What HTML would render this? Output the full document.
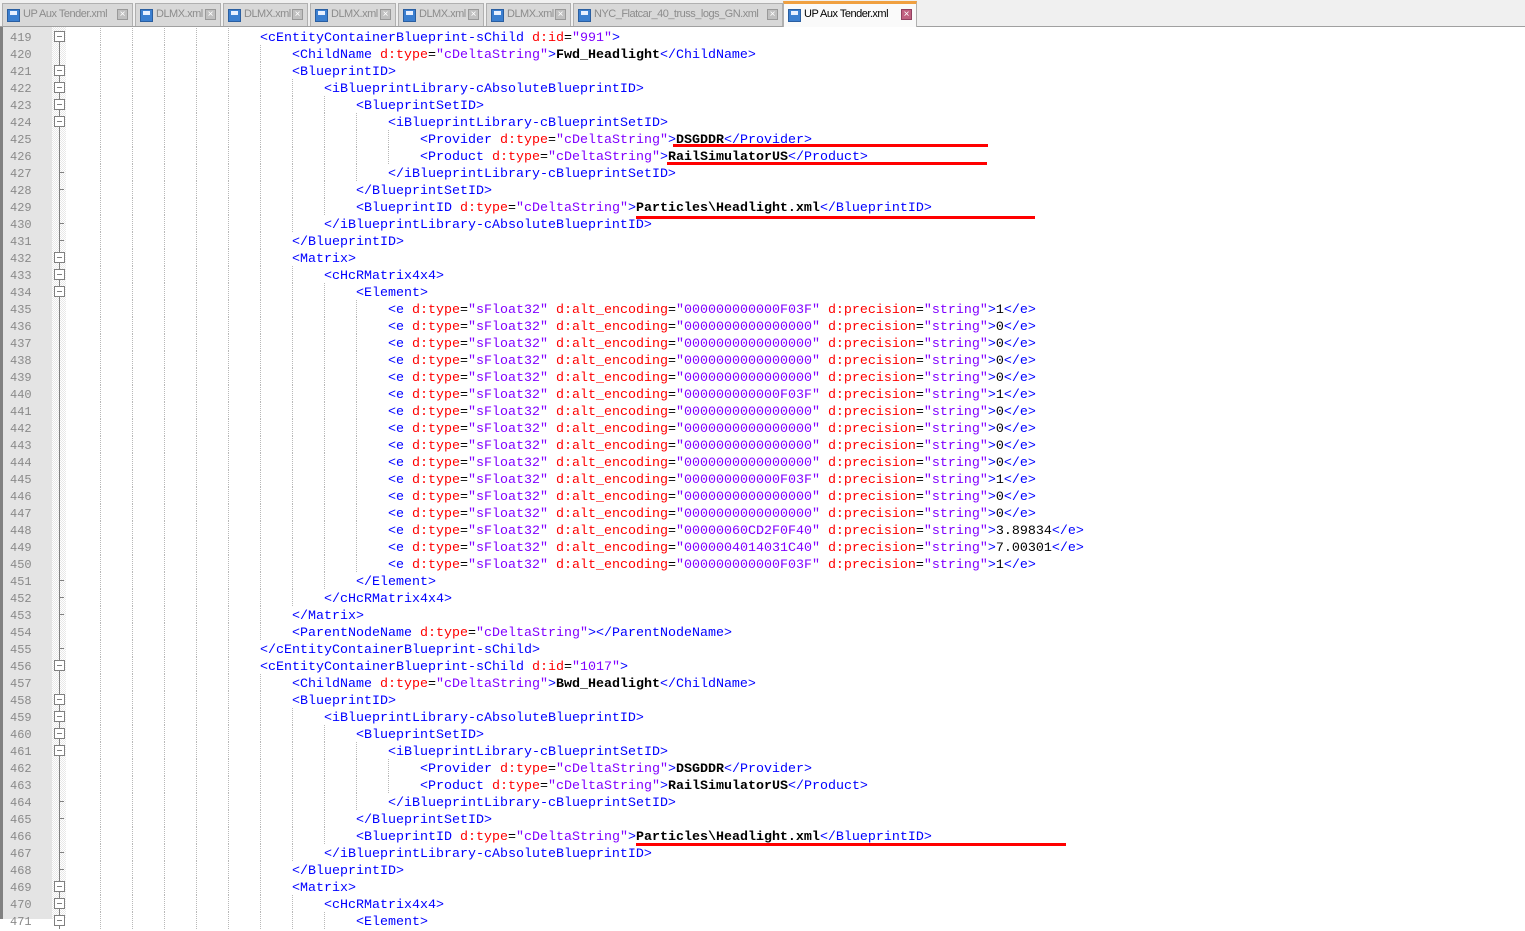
<!DOCTYPE html>
<html><head><meta charset="utf-8"><style>
*{margin:0;padding:0;box-sizing:border-box}
body{width:1525px;height:919px;overflow:hidden;background:#fff;position:relative;font-family:"Liberation Mono",monospace}
#tabs{position:absolute;left:0;top:0;width:1525px;height:27px;background:#f0f0f0;border-bottom:1px solid #a0a0a0}
.tab{position:absolute;top:3px;height:23px;background:#d8d8d8;border:1px solid #b0b0b0;border-bottom:none;font-family:"Liberation Sans",sans-serif;font-size:11px;color:#8c8c8c;line-height:21px;padding-left:20px;letter-spacing:-0.5px;white-space:nowrap;overflow:hidden}
.tab .ic{position:absolute;left:4px;top:5px;width:13px;height:13px;background:#3b7fd0;border:1px solid #2a5ea0}
.tab .ic:after{content:"";position:absolute;left:2px;top:1px;width:7px;height:4px;background:#e8f0ff}
.tab .cl{position:absolute;right:4px;top:5px;width:11px;height:11px;background:#c0c0c0;border:1px solid #999;color:#fff;font-size:10px;line-height:9px;text-align:center;letter-spacing:0}
.tab.act{top:1px;height:26px;background:#fafafa;color:#000;border-top:3px solid #f0a040}
.tab.act .cl{background:#c06080;border-color:#904060}
#gut{position:absolute;left:0;top:27px;width:52px;height:892px;background:#e4e4e4;border-left:3px solid #808080}
#fold{position:absolute;left:52px;top:27px;width:14px;height:892px;background:repeating-conic-gradient(#e8e8e8 0 25%,#fff 0 50%) 0 0/2px 2px}
.ln{position:absolute;left:10px;height:17px;line-height:17px;font-size:12px;color:#8a8a8a}
.l{position:absolute;height:17px;line-height:17px;font-size:13.33px;white-space:pre;color:#000}
.g{position:absolute;width:0;height:17px;border-left:1px dotted #b8b8b8}
.t{color:#0000ff}.a{color:#ff0000}.v{color:#8000ff}.x{font-weight:bold}
.vl{position:absolute;left:59px;width:1px;background:#808080}
.fb{position:absolute;left:54px;width:11px;height:11px;border:1px solid #808080;background:#fff}
.fb:after{content:"";position:absolute;left:2px;top:4px;width:5px;height:1px;background:#808080}
.tk{position:absolute;left:59px;width:5px;height:1px;background:#808080}
.r{position:absolute;height:3px;background:#f00}
</style></head><body>
<div id="tabs">
<div class="tab" style="left:2px;width:131px"><span class="ic"></span>UP Aux Tender.xml<span class="cl">×</span></div>
<div class="tab" style="left:135px;width:86px"><span class="ic"></span>DLMX.xml<span class="cl">×</span></div>
<div class="tab" style="left:223px;width:85px"><span class="ic"></span>DLMX.xml<span class="cl">×</span></div>
<div class="tab" style="left:310px;width:86px"><span class="ic"></span>DLMX.xml<span class="cl">×</span></div>
<div class="tab" style="left:398px;width:86px"><span class="ic"></span>DLMX.xml<span class="cl">×</span></div>
<div class="tab" style="left:486px;width:85px"><span class="ic"></span>DLMX.xml<span class="cl">×</span></div>
<div class="tab" style="left:573px;width:210px"><span class="ic"></span>NYC_Flatcar_40_truss_logs_GN.xml<span class="cl">×</span></div>
<div class="tab act" style="left:783px;width:134px"><span class="ic"></span>UP Aux Tender.xml<span class="cl">×</span></div>
</div>
<div id="gut"></div><div id="fold"></div>
<div id="c"></div>
<script>
var L=[
[6,'<span class="t">&lt;cEntityContainerBlueprint-sChild </span><span class="a">d:id</span>=<span class="v">"991"</span><span class="t">&gt;</span>','b'],
[7,'<span class="t">&lt;ChildName </span><span class="a">d:type</span>=<span class="v">"cDeltaString"</span><span class="t">&gt;</span><span class="x">Fwd_Headlight</span><span class="t">&lt;/ChildName&gt;</span>','l'],
[7,'<span class="t">&lt;BlueprintID&gt;</span>','b'],
[8,'<span class="t">&lt;iBlueprintLibrary-cAbsoluteBlueprintID&gt;</span>','b'],
[9,'<span class="t">&lt;BlueprintSetID&gt;</span>','b'],
[10,'<span class="t">&lt;iBlueprintLibrary-cBlueprintSetID&gt;</span>','b'],
[11,'<span class="t">&lt;Provider </span><span class="a">d:type</span>=<span class="v">"cDeltaString"</span><span class="t">&gt;</span><span class="x">DSGDDR</span><span class="t">&lt;/Provider&gt;</span>','l'],
[11,'<span class="t">&lt;Product </span><span class="a">d:type</span>=<span class="v">"cDeltaString"</span><span class="t">&gt;</span><span class="x">RailSimulatorUS</span><span class="t">&lt;/Product&gt;</span>','l'],
[10,'<span class="t">&lt;/iBlueprintLibrary-cBlueprintSetID&gt;</span>','k'],
[9,'<span class="t">&lt;/BlueprintSetID&gt;</span>','k'],
[9,'<span class="t">&lt;BlueprintID </span><span class="a">d:type</span>=<span class="v">"cDeltaString"</span><span class="t">&gt;</span><span class="x">Particles\\Headlight.xml</span><span class="t">&lt;/BlueprintID&gt;</span>','l'],
[8,'<span class="t">&lt;/iBlueprintLibrary-cAbsoluteBlueprintID&gt;</span>','k'],
[7,'<span class="t">&lt;/BlueprintID&gt;</span>','k'],
[7,'<span class="t">&lt;Matrix&gt;</span>','b'],
[8,'<span class="t">&lt;cHcRMatrix4x4&gt;</span>','b'],
[9,'<span class="t">&lt;Element&gt;</span>','b']];
var E=[['000000000000F03F','1'],['0000000000000000','0'],['0000000000000000','0'],['0000000000000000','0'],['0000000000000000','0'],['000000000000F03F','1'],['0000000000000000','0'],['0000000000000000','0'],['0000000000000000','0'],['0000000000000000','0'],['000000000000F03F','1'],['0000000000000000','0'],['0000000000000000','0'],['00000060CD2F0F40','3.89834'],['0000004014031C40','7.00301'],['000000000000F03F','1']];
E.forEach(function(e){L.push([10,'<span class="t">&lt;e </span><span class="a">d:type</span>=<span class="v">"sFloat32"</span> <span class="a">d:alt_encoding</span>=<span class="v">"'+e[0]+'"</span> <span class="a">d:precision</span>=<span class="v">"string"</span><span class="t">&gt;</span>'+e[1]+'<span class="t">&lt;/e&gt;</span>','l'])});
L=L.concat([
[9,'<span class="t">&lt;/Element&gt;</span>','k'],
[8,'<span class="t">&lt;/cHcRMatrix4x4&gt;</span>','k'],
[7,'<span class="t">&lt;/Matrix&gt;</span>','k'],
[7,'<span class="t">&lt;ParentNodeName </span><span class="a">d:type</span>=<span class="v">"cDeltaString"</span><span class="t">&gt;&lt;/ParentNodeName&gt;</span>','l'],
[6,'<span class="t">&lt;/cEntityContainerBlueprint-sChild&gt;</span>','k'],
[6,'<span class="t">&lt;cEntityContainerBlueprint-sChild </span><span class="a">d:id</span>=<span class="v">"1017"</span><span class="t">&gt;</span>','b'],
[7,'<span class="t">&lt;ChildName </span><span class="a">d:type</span>=<span class="v">"cDeltaString"</span><span class="t">&gt;</span><span class="x">Bwd_Headlight</span><span class="t">&lt;/ChildName&gt;</span>','l'],
[7,'<span class="t">&lt;BlueprintID&gt;</span>','b'],
[8,'<span class="t">&lt;iBlueprintLibrary-cAbsoluteBlueprintID&gt;</span>','b'],
[9,'<span class="t">&lt;BlueprintSetID&gt;</span>','b'],
[10,'<span class="t">&lt;iBlueprintLibrary-cBlueprintSetID&gt;</span>','b'],
[11,'<span class="t">&lt;Provider </span><span class="a">d:type</span>=<span class="v">"cDeltaString"</span><span class="t">&gt;</span><span class="x">DSGDDR</span><span class="t">&lt;/Provider&gt;</span>','l'],
[11,'<span class="t">&lt;Product </span><span class="a">d:type</span>=<span class="v">"cDeltaString"</span><span class="t">&gt;</span><span class="x">RailSimulatorUS</span><span class="t">&lt;/Product&gt;</span>','l'],
[10,'<span class="t">&lt;/iBlueprintLibrary-cBlueprintSetID&gt;</span>','k'],
[9,'<span class="t">&lt;/BlueprintSetID&gt;</span>','k'],
[9,'<span class="t">&lt;BlueprintID </span><span class="a">d:type</span>=<span class="v">"cDeltaString"</span><span class="t">&gt;</span><span class="x">Particles\\Headlight.xml</span><span class="t">&lt;/BlueprintID&gt;</span>','l'],
[8,'<span class="t">&lt;/iBlueprintLibrary-cAbsoluteBlueprintID&gt;</span>','k'],
[7,'<span class="t">&lt;/BlueprintID&gt;</span>','k'],
[7,'<span class="t">&lt;Matrix&gt;</span>','b'],
[8,'<span class="t">&lt;cHcRMatrix4x4&gt;</span>','b'],
[9,'<span class="t">&lt;Element&gt;</span>','b']]);
var h='';
L.forEach(function(r,i){var y=30+17*i;
h+='<div class="ln" style="top:'+y+'px">'+(419+i)+'</div>';
for(var k=1;k<r[0];k++)h+='<div class="g" style="left:'+(68+32*k)+'px;top:'+(y-2)+'px"></div>';
h+='<div class="l" style="left:'+(68+32*r[0])+'px;top:'+y+'px">'+r[1]+'</div>';
h+='<div class="vl" style="top:'+(i==0?y+8:y-2)+'px;height:17px"></div>';
if(r[2]=='b')h+='<div class="fb" style="top:'+(y+1)+'px"></div>';
if(r[2]=='k')h+='<div class="tk" style="top:'+(y+6)+'px"></div>';
});
h+='<div class="r" style="left:673px;top:144px;width:315px"></div>';
h+='<div class="r" style="left:667px;top:162px;width:320px"></div>';
h+='<div class="r" style="left:636px;top:216px;width:399px"></div>';
h+='<div class="r" style="left:636px;top:843px;width:430px"></div>';
document.getElementById('c').innerHTML=h;
</script>
</body></html>
